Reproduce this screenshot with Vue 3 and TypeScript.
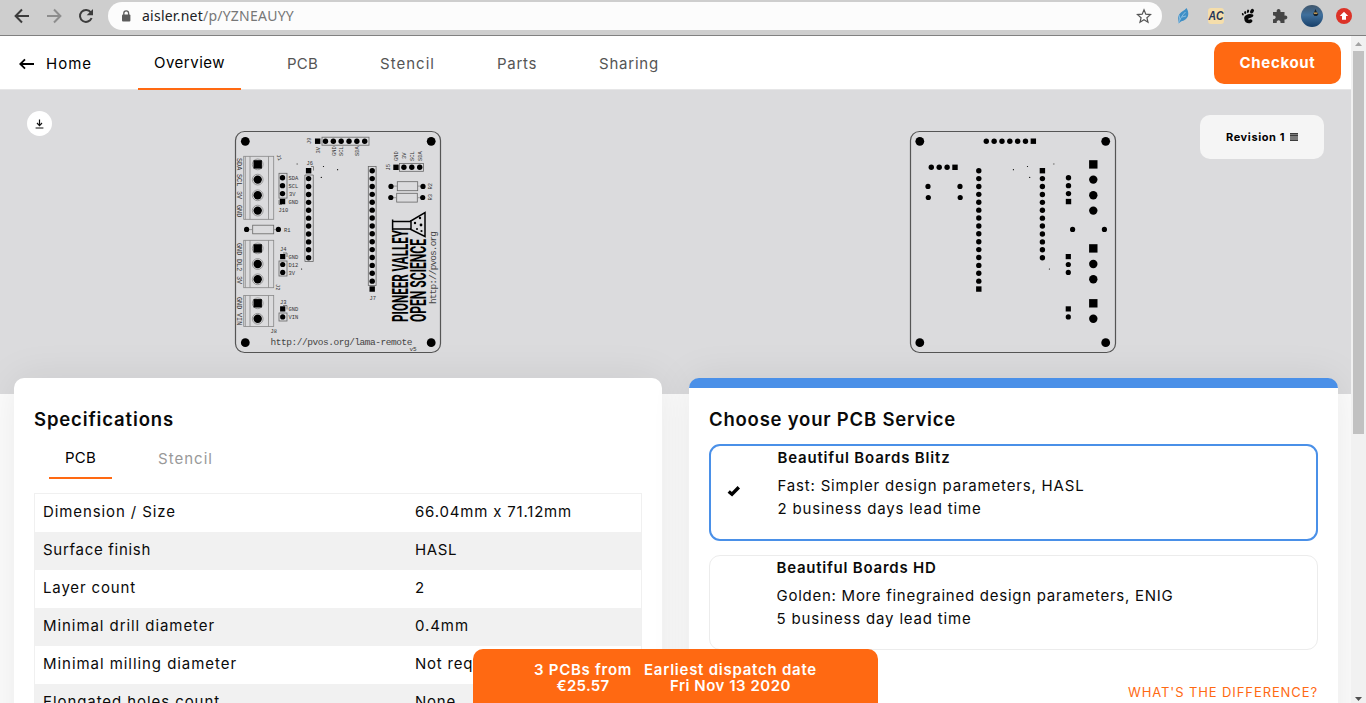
<script setup lang="ts">
import type { Directive } from 'vue'

interface Pad { x: number; y: number; r: number; square?: boolean }
interface Label { x: number; y: number; t: string; a?: number; s?: number }

// Tracks a line of text so that it fills the given width.
const vFit: Directive<HTMLElement, number> = {
  mounted(el, { value }) {
    const count = (el.textContent ?? '').length
    const natural = el.getBoundingClientRect().width
    el.style.letterSpacing = `${(value - natural) / count}px`
  },
}

const tabs = [
  { name: 'Overview', w: 71 },
  { name: 'PCB', w: 31 },
  { name: 'Stencil', w: 55 },
  { name: 'Parts', w: 40 },
  { name: 'Sharing', w: 60 },
]

const rows = [
  { k: 'Dimension / Size', kw: 133, v: '66.04mm x 71.12mm', vw: 157 },
  { k: 'Surface finish', kw: 108, v: 'HASL', vw: 42 },
  { k: 'Layer count', kw: 93, v: '2', vw: 10 },
  { k: 'Minimal drill diameter', kw: 172, v: '0.4mm', vw: 54 },
  { k: 'Minimal milling diameter', kw: 194, v: 'Not required', vw: 98 },
  { k: 'Elongated holes count', kw: 177, v: 'None', vw: 41 },
]

const services = [
  { title: 'Beautiful Boards Blitz', tw: 173, a: 'Fast: Simpler design parameters, HASL', aw: 307, b: '2 business days lead time', bw: 204, on: true },
  { title: 'Beautiful Boards HD', tw: 160, a: 'Golden: More finegrained design parameters, ENIG', aw: 397, b: '5 business day lead time', bw: 195, on: false },
]

const pads: Pad[] = []
const add = (x: number, y: number, r: number, square = false) => pads.push({ x, y, r, square })
for (const x of [919.8, 1105.7]) for (const y of [141.3, 342.7]) add(x, y, 4.4)
for (let i = 0; i < 7; i++) add(986.3 + i * 7.84, 141.2, 2.7, i === 6)
for (let i = 0; i < 4; i++) add(931.3 + i * 7.9, 167.3, 2.7, i === 3)
for (let i = 0; i < 16; i++) add(978.8, 170.7 + i * 7.89, 2.7, i === 15)
for (let i = 0; i < 12; i++) add(1042.4, 170.7 + i * 7.91, 2.7, i === 0)
for (let i = 0; i < 4; i++) add(1068.5, 177.7 + i * 7.95, 2.7, i === 3)
for (let i = 0; i < 3; i++) add(1068.3, 256.6 + i * 7.9, 2.6, i === 0)
for (let i = 0; i < 2; i++) add(1068.3, 308.9 + i * 8, 2.6, i === 0)
for (const [x, y] of [[928, 186.4], [960, 186.4], [928.3, 197.5], [960.2, 197.5], [1072.6, 229.4], [1104.4, 229.4]]) add(x, y, 2.6)
const terminals: Pad[] = [164.4, 179.6, 195.3, 210.6, 248.4, 264, 279.3, 303.3, 318.8].map((y) => ({
  x: 1093.3, y, r: 4.2, square: y === 164.4 || y === 248.4 || y === 303.3,
}))
pads.push(...terminals)
const vias = [[1013.4, 169.7], [1027.5, 166.5], [1029.7, 177.4], [1049.4, 269]]

const labels: Label[] = [
  { x: 237, y: 158, t: 'SDA', a: 90, s: 6.8 }, { x: 237, y: 174, t: 'SCL', a: 90, s: 6.8 },
  { x: 237, y: 191, t: '3V', a: 90, s: 6.8 }, { x: 237, y: 205, t: 'GND', a: 90, s: 6.8 },
  { x: 237, y: 243, t: 'GND', a: 90, s: 6.8 }, { x: 237, y: 259, t: 'DL2', a: 90, s: 6.8 },
  { x: 237, y: 276, t: '3V', a: 90, s: 6.8 }, { x: 237, y: 297, t: 'GND', a: 90, s: 6.8 },
  { x: 237, y: 313, t: 'VIN', a: 90, s: 6.8 },
  { x: 288.5, y: 179.7, t: 'SDA' }, { x: 288.5, y: 187.8, t: 'SCL' }, { x: 289, y: 195.5, t: '3V' }, { x: 288.5, y: 203.8, t: 'GND' },
  { x: 278.5, y: 212, t: 'J10' }, { x: 284, y: 231.5, t: 'R1' }, { x: 276.5, y: 155, t: 'J1', a: 70 },
  { x: 280, y: 250.5, t: 'J4' }, { x: 288.5, y: 258.8, t: 'GND' }, { x: 288.5, y: 266.8, t: 'D12' }, { x: 288.5, y: 274.5, t: '3V' },
  { x: 276, y: 284, t: 'J2', a: 90 }, { x: 280, y: 303.5, t: 'J3' }, { x: 288.5, y: 311, t: 'GND' }, { x: 288.5, y: 319, t: 'VIN' },
  { x: 270.5, y: 332.5, t: 'J8' }, { x: 306.5, y: 164.8, t: 'J6' }, { x: 369.5, y: 299.5, t: 'J7' },
  { x: 311, y: 144, t: 'J9', a: -90 }, { x: 320, y: 153.5, t: '3V', a: -90 }, { x: 335.5, y: 156, t: 'GND', a: -90 },
  { x: 343, y: 156, t: 'SCL', a: -90 }, { x: 359, y: 156, t: 'SDA', a: -90 },
  { x: 389.5, y: 170.5, t: 'J5', a: -90 }, { x: 397.5, y: 161, t: 'GND', a: -90 }, { x: 406, y: 159, t: '3V', a: -90 },
  { x: 414, y: 161, t: 'SCL', a: -90 }, { x: 421.5, y: 161, t: 'SDA', a: -90 },
  { x: 432, y: 189.5, t: 'R2', a: -90 }, { x: 432, y: 200.5, t: 'R3', a: -90 }, { x: 409.5, y: 350.5, t: 'v5', s: 6 },
]
const blocks = [[156.3, 63], [240.3, 47.4], [295.5, 31]]
const outlines = [
  [279, 173.3, 8, 24.8], [279, 261, 8, 15], [279, 313, 8, 8],
  [322, 137.2, 47, 8], [399.5, 163.5, 24, 7.8], [368.3, 166.5, 7.8, 119],
]
const resistors = [[252.7, 225.2, 21, 8.6], [397.3, 181.7, 20.4, 9], [396.7, 193.3, 20.6, 8.8]]
</script>

<template>
  <div class="window">
    <header class="chrome">
      <svg class="nav-icons" width="108" height="32" viewBox="0 0 108 32" fill="none" stroke-width="2">
        <path d="M29 16H16M22 9.5L15.6 16l6.4 6.5" stroke="#3c3c3c" />
        <path d="M47 16h13M54 9.5l6.4 6.5-6.4 6.5" stroke="#8d8d8d" />
        <path d="M90.800 12.300A6 6 0 1 0 91.600 18" stroke="#3c3c3c" />
        <path d="M93 9v6.300h-6.300z" fill="#3c3c3c" />
      </svg>
      <div class="omnibox">
        <svg width="10" height="12" viewBox="0 0 10 12"><rect x="1" y="4.500" width="8.400" height="7" rx="1" fill="#5c5c5c" /><path d="M2.800 5V3.200a2.400 2.400 0 0 1 4.800 0V5" fill="none" stroke="#5c5c5c" stroke-width="1.300" /></svg>
        <span v-fit="152" class="url">aisler.net<i>/p/YZNEAUYY</i></span>
        <svg class="star" width="16" height="16" viewBox="0 0 16 16"><path d="M8 1.800l1.800 4.400 4.700.4-3.600 3.100 1.100 4.600L8 11.800l-4 2.500 1.100-4.600L1.500 6.600l4.700-.4z" fill="none" stroke="#555" stroke-width="1.200" /></svg>
      </div>
      <svg class="ext" width="204" height="32" viewBox="1162 0 204 32">
        <path d="M1186.500 8c2 3 3 8-.5 11-2 2-3.500 1.500-5 2.500l-2.500 2c.5-3-1.500-6 1-9.500 2-3 5-3 7-6z" fill="#3f8fc6" />
        <path d="M1178.500 23c2-5 4-8 7-11M1182 17l4-1M1180 20l-1-5" fill="none" stroke="#9ac9e8" stroke-width=".8" />
        <rect x="1208" y="8" width="16" height="16" rx="3" fill="#f5deab" />
        <text x="1208.500" y="20.300" textLength="15" lengthAdjust="spacingAndGlyphs" class="ac">AC</text>
        <g fill="#080808"><ellipse cx="1252" cy="11.200" rx="2.500" ry="1.700" transform="rotate(-55 1252 11.200)" /><ellipse cx="1248" cy="11.300" rx="1.100" ry="1.700" transform="rotate(15 1248 11.300)" /><ellipse cx="1245.200" cy="12.400" rx="1" ry="1.500" /><ellipse cx="1242.800" cy="14.200" rx=".9" ry="1.300" transform="rotate(-20 1242.800 14.200)" /><path d="M1253 14.500c-3-1.500-9 0-8.800 4 .2 4 3.300 5.300 6.300 4.600 2.300-.6 2.600-3 .9-3.600-1.400-.5-2.300.6-3 0-.8-1 1.300-1.500 2.800-2 1.800-.6 2.800-2 1.800-3z" /></g>
        <path d="M1273 12h3.700c-.8-4 4.600-4 3.800 0h4v3.700c3.800-.8 3.800 4.600 0 3.800V23h-4c.6-3.800-4.400-3.800-3.800 0H1273v-3.800c3.600.5 3.600-4.200 0-3.600z" fill="#454545" />
        <defs><linearGradient id="lake" x2="0" y2="1"><stop offset="0" stop-color="#40566b" /><stop offset=".45" stop-color="#3f6f9c" /><stop offset="1" stop-color="#173f69" /></linearGradient></defs>
        <circle cx="1312" cy="16" r="11" fill="url(#lake)" />
        <path d="M1313 14l1.500-2.500 1-2.500 1 2.500 2 2.500-1.500 2h-2.500z" fill="#17222b" /><path d="M1313.800 13.200h3.600" stroke="#c09a58" stroke-width="1.500" />
        <circle cx="1344" cy="16" r="8" fill="#dc3227" /><path d="M1344 11.800l4.200 4.200h-2.200v3.800h-4V16h-2.200z" fill="#fff" />
      </svg>
    </header>

    <div class="viewport">
      <div class="page">
        <nav class="topbar">
          <a class="home">
            <svg width="16" height="12" viewBox="0 0 16 12"><path d="M15 6H1.500M6 1.400L1.300 6 6 10.600" fill="none" stroke="#000" stroke-width="1.800" /></svg>
            <span v-fit="46">Home</span>
          </a>
          <a v-for="(t, i) in tabs" :key="t.name" class="tab" :class="{ active: i === 0 }"><span v-fit="t.w">{{ t.name }}</span></a>
          <button class="checkout"><span v-fit="76">Checkout</span></button>
        </nav>

        <section class="hero">
          <button class="download">
            <svg width="9" height="10" viewBox="0 0 9 10" fill="none" stroke="#111" stroke-width="1.200"><path d="M4.500 .5v6M2 4l2.500 2.600L7 4M.6 9h7.800" /></svg>
          </button>
          <svg class="board front" width="208" height="224" viewBox="234 130 208 224">
            <rect class="edge" x="235.500" y="131.500" width="205" height="221" rx="9" />
            <g class="silk">
              <g v-for="b in blocks" :key="b[0]">
                <rect x="243.700" :y="b[0]" width="30" :height="b[1]" />
                <path :d="`M245.300 ${b[0]}v${b[1]}M250 ${b[0]}v${b[1]}M268.500 ${b[0]}v${b[1]}`" />
              </g>
              <circle v-for="p in terminals" :key="p.y" :cx="1351 - p.x" :cy="p.y" r="5.400" />
              <rect v-for="(o, i) in outlines" :key="i" class="dark" :x="o[0]" :y="o[1]" :width="o[2]" :height="o[3]" />
              <path class="dark" d="M304.900 175V261.500H313.300V175M304.900 175h8.400M311 166.500h2.500v4M283 253h4v4M283 305.500h4v4M279 200v4.500h3" />
              <g v-for="r in resistors" :key="r[1]">
                <rect class="dark" :x="r[0]" :y="r[1]" :width="r[2]" :height="r[3]" />
                <path :d="`M${r[0] - 5} ${r[1] + 4.400}h5M${r[0] + r[2]} ${r[1] + 4.400}h5`" />
              </g>
            </g>
            <g transform="translate(1351 0) scale(-1 1)">
              <template v-for="(p, i) in pads" :key="i">
                <rect v-if="p.square" :x="p.x - p.r" :y="p.y - p.r" :width="p.r * 2" :height="p.r * 2" />
                <circle v-else :cx="p.x" :cy="p.y" :r="p.r" />
              </template>
              <circle v-for="v in vias" :key="v[0]" :cx="v[0]" :cy="v[1]" r=".6" />
              <circle cx="1053.800" cy="164" r=".9" fill="#999" />
            </g>
            <text v-for="(l, i) in labels" :key="i" class="tiny" :font-size="l.s ?? 5.400" :transform="`translate(${l.x} ${l.y}) rotate(${l.a ?? 0})`">{{ l.t }}</text>
            <text class="logo" transform="translate(407.500 322) rotate(-90)" textLength="92" lengthAdjust="spacingAndGlyphs">PIONEER VALLEY</text>
            <text class="logo" transform="translate(425.800 322) rotate(-90)" textLength="83" lengthAdjust="spacingAndGlyphs">OPEN SCIENCE</text>
            <path d="M392.600 219.500V230M392.600 221.500H410L425 212.500V236.500L410 229H392.600M411 220V230" fill="none" stroke="#000" stroke-width="1.500" />
            <g><circle cx="415" cy="223" r="1.200" /><circle cx="420" cy="218" r="1.200" /><circle cx="421" cy="225" r="1.400" /><circle cx="417" cy="229" r="1" /><circle cx="421.500" cy="231" r="1.100" /></g>
            <text class="web" transform="translate(435.500 304) rotate(-90)" textLength="73">http://pvos.org</text>
            <text class="web" x="270.500" y="345" textLength="142">http://pvos.org/lama-remote</text>
          </svg>
          <svg class="board back" width="208" height="224" viewBox="909 130 208 224">
            <rect class="edge" x="910.500" y="131.500" width="205" height="221" rx="9" />
            <template v-for="(p, i) in pads" :key="i">
              <rect v-if="p.square" :x="p.x - p.r" :y="p.y - p.r" :width="p.r * 2" :height="p.r * 2" />
              <circle v-else :cx="p.x" :cy="p.y" :r="p.r" />
            </template>
            <circle v-for="v in vias" :key="v[0]" :cx="v[0]" :cy="v[1]" r=".6" />
            <circle cx="1053.800" cy="164" r=".9" fill="#999" />
          </svg>
          <button class="revision">
            <span v-fit="59">Revision 1</span>
            <svg width="8" height="8" viewBox="0 0 8 8"><path d="M0 .8h8M0 2.900h8M0 5h8M0 7.100h8" stroke="#000" stroke-width="1.200" /></svg>
          </button>
        </section>

        <main class="cards">
          <section class="card">
            <h2><span v-fit="140">Specifications</span></h2>
            <div class="subtabs">
              <a class="active"><span v-fit="31">PCB</span></a>
              <a><span v-fit="55">Stencil</span></a>
            </div>
            <div class="table">
              <div v-for="r in rows" :key="r.k" class="row">
                <div class="key"><span v-fit="r.kw">{{ r.k }}</span></div>
                <div><span v-fit="r.vw">{{ r.v }}</span></div>
              </div>
            </div>
          </section>

          <section class="card service-card">
            <h2><span v-fit="247">Choose your PCB Service</span></h2>
            <div v-for="s in services" :key="s.title" class="service" :class="{ on: s.on }">
              <div class="mark">
                <svg v-if="s.on" width="14" height="12" viewBox="0 0 14 12"><path d="M1.700 6.500L5 9.300 11.800 2.300" fill="none" stroke="#000" stroke-width="3.400" /></svg>
              </div>
              <div class="info">
                <h3><span v-fit="s.tw">{{ s.title }}</span></h3>
                <p><span v-fit="s.aw">{{ s.a }}</span></p>
                <p><span v-fit="s.bw">{{ s.b }}</span></p>
              </div>
            </div>
            <a class="difference"><span v-fit="190">WHAT'S THE DIFFERENCE?</span></a>
          </section>
        </main>

        <div class="summary">
          <div><span v-fit="98">3 PCBs from</span><span v-fit="53">€25.57</span></div>
          <div><span v-fit="173">Earliest dispatch date</span><span v-fit="121">Fri Nov 13 2020</span></div>
        </div>
      </div>
      <div class="scrollbar">
        <svg width="15" height="15" viewBox="0 0 15 15"><path d="M4 10h7L7.500 6z" fill="#a3a3a3" /></svg>
        <div class="thumb"></div>
        <svg class="down" width="15" height="15" viewBox="0 0 15 15"><path d="M4 9h7l-3.500 4z" fill="#505050" /></svg>
      </div>
    </div>
  </div>
</template>

<style>
body { margin: 0; overflow: hidden; }
</style>

<style scoped>
.window { width: 1366px; height: 703px; overflow: hidden; display: flex; flex-direction: column; font: 15px/22px Inter, sans-serif; color: #0a0a0a; background: #fff; }
.window * { box-sizing: border-box; }
span { display: inline-block; white-space: nowrap; flex: none; }
svg { display: block; flex: none; }
button { border: 0; padding: 0; font: inherit; color: inherit; }
.chrome { height: 36px; flex: none; display: flex; align-items: flex-start; background: #cecece; border-bottom: 1px solid #808080; }
.omnibox { width: 1054px; height: 28px; margin-top: 2px; border-radius: 14px; background: #fcfcfc; display: flex; align-items: center; padding-left: 13px; }
.url { margin-left: 11px; font: 14px/20px "Noto Sans", sans-serif; color: #202124; }
.url i { font-style: normal; color: #777; }
.star { margin-left: auto; margin-right: 10px; }
.ac { font: italic 700 12px "Liberation Sans", sans-serif; fill: #24365a; }

.viewport { flex: 1; min-height: 0; display: flex; }
.page { width: 1351px; position: relative; overflow: hidden; background: #fcfcfc; }
.topbar { height: 54px; display: flex; align-items: stretch; background: #fff; border-bottom: 1px solid #e6e6e7; }
.home { width: 108px; margin-right: 30px; padding-left: 19px; padding-top: 2px; display: flex; align-items: center; gap: 11px; color: #000; }
.tab { height: 54px; margin-right: 30px; padding: 2px 16px 0; display: flex; align-items: center; color: #555; }
.tab.active { color: #000; border-bottom: 2px solid #ff6912; }
.checkout { width: 127px; height: 42px; margin: 6px 10px 0 auto; border-radius: 10px; background: #ff6912; color: #fff; font-weight: 700; }
.hero { height: 304px; background: #dbdbdd; display: flex; align-items: flex-start; }
.download { width: 25px; height: 25px; margin: 21px 0 0 27px; border-radius: 50%; background: #fff; display: flex; align-items: center; justify-content: center; }
.board { margin-top: 40px; }
.front { margin-left: 182px; }
.back { margin-left: 467px; }
.edge { fill: none; stroke: #555; stroke-width: 1.2; }
.silk { fill: none; stroke: #888; stroke-width: .8; }
.silk .dark { stroke: #666; }
.tiny { fill: #333; font-family: "Liberation Mono", monospace; }
.logo { font: 700 22px Roboto, sans-serif; fill: #000; }
.web { font: 9.5px "Liberation Mono", monospace; fill: #444; }
.revision { width: 124px; height: 44px; margin: 25px 27px 0 auto; border-radius: 10px; background: #f5f5f5; font-size: 11px; font-weight: 700; color: #000; display: flex; align-items: center; justify-content: center; gap: 5px; }

.cards { margin-top: -16px; padding: 0 13px 0 14px; display: flex; gap: 27px; }
.card { width: 648px; height: 420px; padding: 29px 20px 0; border-radius: 10px; background: #fff; box-shadow: 0 0 40px rgba(0, 0, 0, .08); overflow: hidden; }
.service-card { width: 649px; border-top: 10px solid #4a90e8; padding-top: 19px; }
h2 { margin: 0; font-size: 18.5px; line-height: 24px; font-weight: 600; }
.subtabs { display: flex; gap: 30px; padding-left: 15px; height: 48px; }
.subtabs a { height: 48px; padding: 17px 16px 0; color: #999; }
.subtabs .active { color: #000; border-bottom: 2px solid #ff6912; padding-top: 16px; }
.table { margin-top: 14px; border: 1px solid #f0f0f0; }
.row { height: 38px; display: flex; align-items: center; padding: 0 0 2px 8px; }
.row:nth-child(even) { background: #f1f1f1; }
.key { width: 372px; }
.service { height: 95px; margin-bottom: 15px; border: 1px solid #ececec; border-radius: 11px; display: flex; }
.service.on { height: 97px; margin: 13px 0 14px; border: 2px solid #4a90e8; }
.mark { width: 66.5px; padding: 39px 0 0 15.5px; }
h3 { margin: 0 0 5px; font-size: 15px; line-height: 22px; font-weight: 600; }
.info { padding-top: 1px; }
.info p { margin: 0; line-height: 23px; }
.difference { display: flex; justify-content: flex-end; margin-top: 31px; font-size: 13px; color: #ff6912; }
.summary { position: absolute; left: 473px; bottom: 0; width: 405px; height: 54px; padding-top: 13px; border-radius: 10px 10px 0 0; background: #ff6912; color: #fff; display: flex; justify-content: center; gap: 12px; font-weight: 600; line-height: 16px; }
.summary div { display: flex; flex-direction: column; align-items: center; }
.scrollbar { width: 15px; background: #f1f1f1; display: flex; flex-direction: column; }
.thumb { width: 11px; height: 383px; margin-left: 2px; background: #c1c1c1; }
.down { margin-top: auto; }
</style>
